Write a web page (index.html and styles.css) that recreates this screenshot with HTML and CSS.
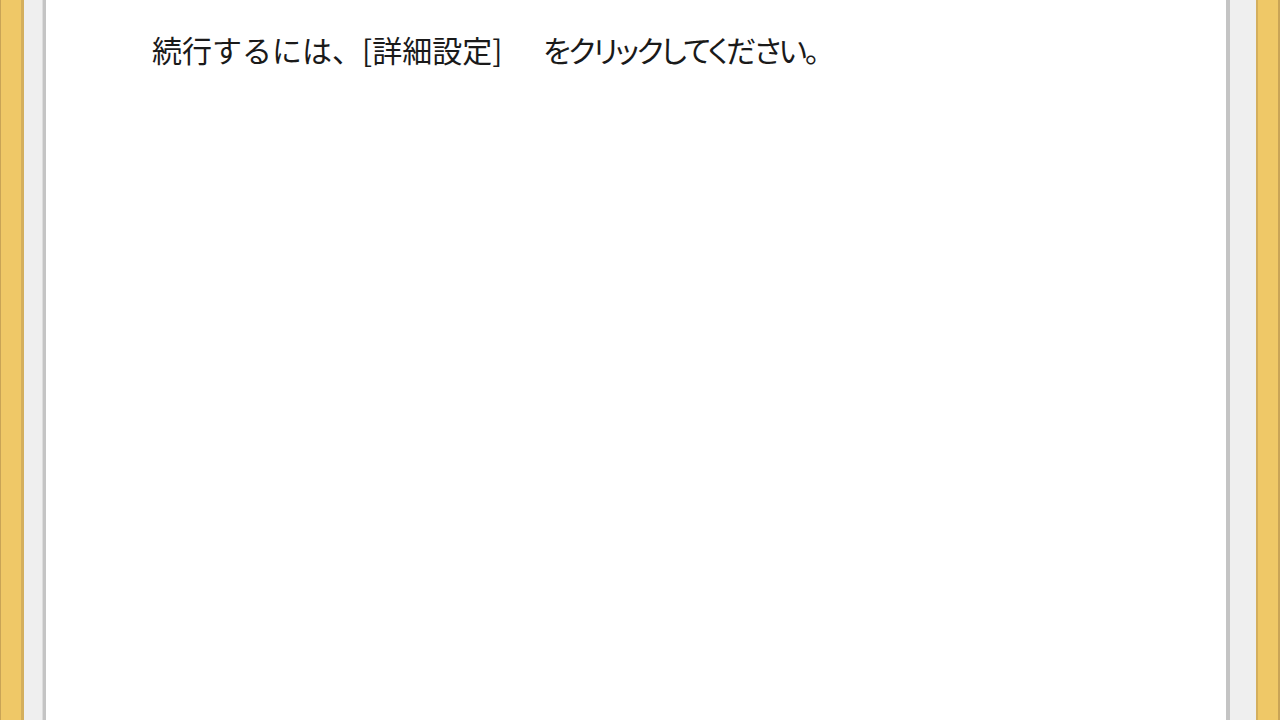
FILE: index.html
```html
<!DOCTYPE html>
<html lang="ja">
<head>
<meta charset="utf-8">
<link rel="stylesheet" href="styles.css">
</head>
<body>
<div class="screen">
  <div class="frame frame-left"></div>
  <div class="chrome chrome-left"></div>
  <main class="dialog">
    <p class="message"><span class="lead">続行するには、[詳細設定]</span> <span class="tail">をクリックしてください。</span></p>
  </main>
  <div class="chrome chrome-right"></div>
  <div class="frame frame-right"></div>
</div>
</body>
</html>
```

FILE: styles.css
```css
html, body {
  margin: 0;
  padding: 0;
  width: 1280px;
  height: 720px;
  overflow: hidden;
  background: #ffffff;
}
.screen {
  display: flex;
  width: 1280px;
  height: 720px;
}
.frame {
  background: #efc867;
  box-sizing: border-box;
}
.frame-left {
  width: 24px;
  border-left: 1px solid #c9a456;
  border-right: 3px solid #d4af5d;
}
.frame-right {
  width: 24px;
  border-left: 2px solid #d4af5d;
  border-right: 2px solid #c9a456;
}
.chrome {
  background: #efefef;
  box-sizing: border-box;
}
.chrome-left {
  width: 22px;
  border-right: 3px solid #c4c4c4;
  box-shadow: inset -1px 0 0 #dcdcdc;
}
.chrome-right {
  width: 30px;
  border-left: 4px solid #c4c4c4;
}
.dialog {
  flex: 1;
  background: #ffffff;
  padding: 30px 0 0 106px;
  box-sizing: border-box;
}
.message {
  margin: 0;
  font-family: "Noto Sans CJK JP", "Noto Sans", sans-serif;
  font-size: 30px;
  line-height: 38px;
  color: #1a1a1a;
  white-space: nowrap;
}
.tail {
  margin-left: 34px;
  font-feature-settings: "palt";
  letter-spacing: -2.3px;
}
```
